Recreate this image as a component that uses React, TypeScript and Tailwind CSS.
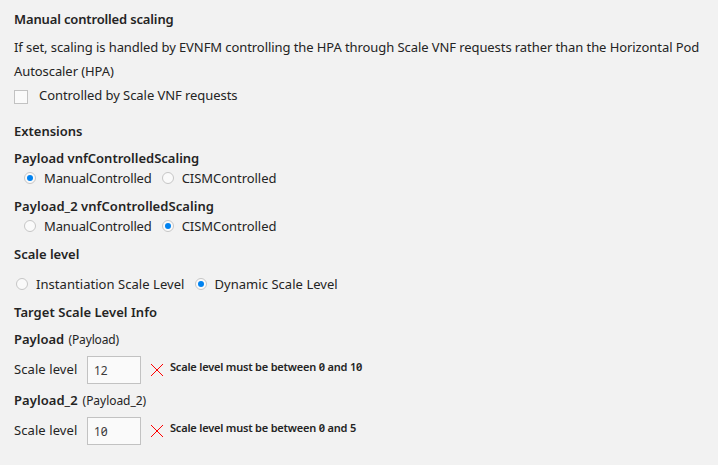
import type { ReactNode } from "react";

function Heading({ children, className = "" }: { children: ReactNode; className?: string }) {
  return <h2 className={`whitespace-nowrap text-[13px] leading-6 font-semibold ${className}`}>{children}</h2>;
}

function Radio({ label, checked = false, className = "" }: { label: string; checked?: boolean; className?: string }) {
  return (
    <label className="flex items-center whitespace-nowrap">
      <span className="mr-2 flex size-3 shrink-0 items-center justify-center rounded-full border border-[#c6c6c6] bg-[#fafafa]">
        {checked && <span className="size-1.5 rounded-full bg-[#0082f0]" />}
      </span>
      <span className={className}>{label}</span>
    </label>
  );
}

function ScaleRow({ value, message }: { value: string; message: string }) {
  return (
    <div className="flex h-7 items-center whitespace-nowrap">
      <span className="-mt-0.5 w-[73px] tracking-[0.08px]">Scale level</span>
      <input
        readOnly
        value={value}
        className="h-7 w-[54px] border border-[#c2c2c2] bg-[#fafafa] px-1.5 text-[12px] tracking-[-0.2px] text-[#3c3c3c] slashed-zero outline-none"
      />
      <svg className="ml-[10px] size-3 shrink-0" viewBox="0 0 12 12" fill="none" stroke="#ff0000">
        <path d="M0 0 12 12M12 0 0 12" />
      </svg>
      <span className="-mt-1.5 ml-[7px] text-[11px] font-semibold tracking-[-0.2px] slashed-zero">{message}</span>
    </div>
  );
}

export default function App() {
  return (
    <main className="flex h-[465px] w-[718px] flex-col bg-[#f2f2f2] pt-[7px] pl-[14px] font-['Noto_Sans',sans-serif] text-[13px] leading-6 text-[#242424]">
      <Heading className="tracking-[-0.15px]">Manual controlled scaling</Heading>
      <p className="mt-1 whitespace-nowrap tracking-[-0.08px]">
        If set, scaling is handled by EVNFM controlling the HPA through Scale VNF requests rather than the Horizontal Pod
        <br />
        Autoscaler (HPA)
      </p>
      <label className="flex h-6 items-center tracking-[-0.06px]">
        <span className="mt-[3px] mr-[11px] size-[14px] border border-[#c2c2c2] bg-[#fafafa]" />
        Controlled by Scale VNF requests
      </label>
      <Heading className="mt-3">Extensions</Heading>
      <Heading className="mt-[3px]">Payload vnfControlledScaling</Heading>
      <div className="-mt-1 flex gap-[10px] pl-[10px]">
        <Radio label="ManualControlled" checked className="tracking-[-0.12px]" />
        <Radio label="CISMControlled" className="tracking-[-0.05px]" />
      </div>
      <Heading className="mt-1 tracking-[0.06px]">Payload_2 vnfControlledScaling</Heading>
      <div className="-mt-1 flex gap-[10px] pl-[10px]">
        <Radio label="ManualControlled" className="tracking-[-0.12px]" />
        <Radio label="CISMControlled" checked className="tracking-[-0.05px]" />
      </div>
      <Heading className="mt-1">Scale level</Heading>
      <div className="mt-1.5 flex gap-[10px] pl-0.5">
        <Radio label="Instantiation Scale Level" className="tracking-[0.05px]" />
        <Radio label="Dynamic Scale Level" checked className="tracking-[0.04px]" />
      </div>
      <Heading className="mt-1 tracking-[0.05px]">Target Scale Level Info</Heading>
      <Heading className="mt-[3px]">
        Payload <span className="ml-px text-[12px] leading-none font-normal tracking-[-0.15px]">(Payload)</span>
      </Heading>
      <div className="mt-[5px]">
        <ScaleRow value="12" message="Scale level must be between 0 and 10" />
      </div>
      <Heading className="mt-1 tracking-[0.06px]">
        Payload_2 <span className="ml-[1.5px] text-[12px] leading-none font-normal tracking-[-0.04px]">(Payload_2)</span>
      </Heading>
      <div className="mt-[5px]">
        <ScaleRow value="10" message="Scale level must be between 0 and 5" />
      </div>
    </main>
  );
}
